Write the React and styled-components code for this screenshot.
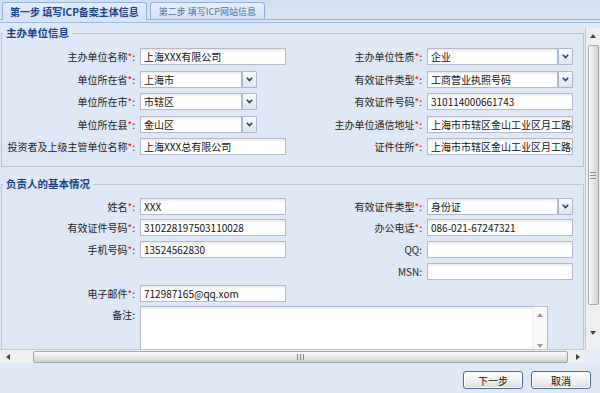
import React from 'react';
import styled, { createGlobalStyle } from 'styled-components';

const GlobalStyle = createGlobalStyle`
  html, body { margin: 0; padding: 0; }
  body {
    background: #dfe8f6;
    font-family: "Noto Sans CJK SC", "Liberation Sans", sans-serif;
    font-size: 10px;
    color: #222;
  }
`;

const Frame = styled.div`
  width: 600px;
  height: 393px;
  display: flex;
  flex-direction: column;
  overflow: hidden;
  background: #dfe8f6;
`;

const TabStrip = styled.div`
  height: 19px;
  flex: none;
  display: flex;
  align-items: flex-end;
  gap: 3px;
  padding-left: 2px;
  background: linear-gradient(#d0dff2, #dae6f5);
  border-bottom: 1px solid #8db2e3;
`;

const Tab = styled.div`
  position: relative;
  box-sizing: border-box;
  height: ${p => (p.$active ? 18 : 17)}px;
  margin-bottom: ${p => (p.$active ? -1 : 0)}px;
  padding: 0 ${p => (p.$active ? 7 : 8)}px;
  border: 1px solid #8db2e3;
  border-bottom: 0;
  border-radius: 3px 3px 0 0;
  background: ${p => (p.$active
    ? 'linear-gradient(#e6effa, #d6e4f5 70%, #dae6f5)'
    : 'linear-gradient(#e9f0fa, #d3e1f3)')};
  color: ${p => (p.$active ? '#15428b' : '#4a70a8')};
  font-weight: ${p => (p.$active ? 'bold' : 'normal')};
  font-size: ${p => (p.$active ? 10 : 9)}px;
  line-height: 17px;
  white-space: nowrap;
`;

const StripBand = styled.div`
  height: 2px;
  flex: none;
  background: #dae6f5;
  border-bottom: 1px solid #99bbe8;
`;

const Body = styled.div`
  flex: none;
  padding-top: 5px;
`;

const ScrollFrame = styled.div`
  display: grid;
  grid-template-columns: 585px 15px;
  grid-template-rows: 321px 14px;
`;

const Viewport = styled.div`
  overflow: clip;
  overflow-clip-margin: 4px;
`;

const FieldSet = styled.fieldset`
  margin: ${p => p.$top}px 1px 0 1px;
  padding: ${p => p.$pt}px 0 ${p => p.$pb}px 0;
  border: 1px solid #b9c4d4;
  min-width: 0;
`;

const Legend = styled.legend`
  margin-left: 1px;
  padding: 0 3px;
  font-size: 10.5px;
  font-weight: bold;
  line-height: 12px;
  color: #15428b;
`;

const FormGrid = styled.div`
  display: grid;
  grid-template-columns: 133px 146px 131px 146px;
  column-gap: 5px;
  row-gap: ${p => p.$gap}px;
`;

const Label = styled.div`
  grid-column: ${p => p.$col};
  align-self: start;
  text-align: right;
  white-space: nowrap;
  line-height: 17px;
  height: 17px;
`;

const Req = styled.span`
  color: #f00;
`;

const TextBox = styled.div`
  grid-column: ${p => p.$col};
  box-sizing: border-box;
  height: 17px;
  padding: 0 3px;
  border: 1px solid #b5b8c8;
  background: #fff linear-gradient(#e8e8e8, #fff 3px);
  line-height: 15px;
  color: #111;
  white-space: nowrap;
  overflow: hidden;
`;

const Combo = styled.div`
  grid-column: ${p => p.$col};
  width: ${p => p.$w}px;
  height: 17px;
  display: flex;
`;

const ComboText = styled(TextBox)`
  flex: 1;
  min-width: 0;
`;

const Trigger = styled.div`
  width: 15px;
  flex: none;
  box-sizing: border-box;
  border: 1px solid #a9b8cc;
  border-radius: 1px;
  background: linear-gradient(#fbfcfe, #dfe6ef);
  display: flex;
  align-items: center;
  justify-content: center;
`;

const Memo = styled.div`
  grid-column: 2 / 5;
  width: 408px;
  height: 46px;
  box-sizing: border-box;
  display: flex;
  border: 1px solid #b5b8c8;
  background: #fff linear-gradient(#e6e6e6, #fff 3px);
`;

const MemoSpace = styled.div`
  flex: 1;
`;

const MemoBar = styled.div`
  width: 14px;
  display: flex;
  flex-direction: column;
  justify-content: space-between;
  align-items: center;
  padding: 6px 0 3px;
  background: #f8f8f8;
  border-left: 1px solid #f0f0f0;
`;

const VBar = styled.div`
  display: flex;
  flex-direction: column;
  box-sizing: border-box;
  background: #eeeff1;
  border-left: 1px solid #c3c8d0;
  padding-bottom: 9px;
`;

const HBar = styled.div`
  display: flex;
  box-sizing: border-box;
  background: #eeeff1;
  border-top: 1px solid #c3c8d0;
`;

const Corner = styled.div`
  background: #e6ecf6;
`;

const ArrowBtn = styled.div`
  flex: none;
  width: ${p => (p.$h ? 15 : 14)}px;
  height: ${p => (p.$h ? 13 : 15)}px;
  display: flex;
  align-items: center;
  justify-content: center;
`;

const Track = styled.div`
  flex: 1;
  display: flex;
  flex-direction: ${p => (p.$h ? 'row' : 'column')};
  align-items: center;
`;

const Thumb = styled.div`
  box-sizing: border-box;
  border: 1px solid #a2a6ac;
  border-radius: 2px;
  display: flex;
  align-items: center;
  justify-content: center;
  ${p => (p.$h
    ? `height: 12px; width: 535px; margin-left: 18px; background: linear-gradient(#fbfbfb, #e4e4e4 55%, #d2d2d2);`
    : `width: 11px; height: 260px; margin-top: 2px; background: linear-gradient(90deg, #fbfbfb, #e4e4e4 55%, #d2d2d2);`)}
`;

const Footer = styled.div`
  flex: 1;
  display: flex;
  justify-content: flex-end;
  align-items: flex-start;
  gap: 8px;
  padding: 8px 9px 0 0;
`;

const Button = styled.button`
  width: 60px;
  height: 18px;
  padding: 0;
  border: 1px solid #4b6a94;
  border-radius: 3px;
  background: linear-gradient(#ffffff, #f1f1f1 50%, #dadada);
  box-shadow: inset 0 0 0 1px #fff;
  font-family: inherit;
  font-size: 10px;
  color: #111;
`;

const Chevron = () => (
  <svg width="7" height="5" viewBox="0 0 7 5">
    <path d="M0.8 0.8 L3.5 3.6 L6.2 0.8" fill="none" stroke="#1d3f7a" strokeWidth="1.6" />
  </svg>
);

const Arrow = ({ dir, color = '#444' }) => {
  const paths = {
    up: 'M0 4 L3 0 L6 4 Z',
    down: 'M0 0 L6 0 L3 4 Z',
    left: 'M4 0 L4 6 L0 3 Z',
    right: 'M0 0 L4 3 L0 6 Z',
  };
  const horiz = dir === 'left' || dir === 'right';
  return (
    <svg width={horiz ? 4 : 6} height={horiz ? 6 : 4} viewBox={horiz ? '0 0 4 6' : '0 0 6 4'}>
      <path d={paths[dir]} fill={color} />
    </svg>
  );
};

const Grip = ({ h }) => (
  <svg width={h ? 7 : 6} height={h ? 6 : 7} viewBox={h ? '0 0 7 6' : '0 0 6 7'}>
    {[0, 3, 6].map(o => (h
      ? <rect key={o} x={o} y="0" width="1" height="6" fill="#888" />
      : <rect key={o} x="0" y={o} width="6" height="1" fill="#888" />))}
  </svg>
);

const Lbl = ({ col, req, children }) => (
  <Label $col={col}>
    {children}
    {req && <Req>*</Req>}:
  </Label>
);

const Select = ({ col, w, value }) => (
  <Combo $col={col} $w={w}>
    <ComboText>{value}</ComboText>
    <Trigger><Chevron /></Trigger>
  </Combo>
);

export default function App() {
  return (
    <Frame>
      <GlobalStyle />
      <TabStrip>
        <Tab $active>第一步 填写ICP备案主体信息</Tab>
        <Tab>第二步 填写ICP网站信息</Tab>
      </TabStrip>
      <StripBand />
      <Body>
        <ScrollFrame>
          <Viewport>
            <FieldSet $top={-1} $pt={9} $pb={11}>
              <Legend>主办单位信息</Legend>
              <FormGrid $gap={5.5}>
                <Lbl col={1} req>主办单位名称</Lbl>
                <TextBox $col={2}>上海XXX有限公司</TextBox>
                <Lbl col={3} req>主办单位性质</Lbl>
                <Select col={4} w={146} value="企业" />

                <Lbl col={1} req>单位所在省</Lbl>
                <Select col={2} w={117} value="上海市" />
                <Lbl col={3} req>有效证件类型</Lbl>
                <Select col={4} w={146} value="工商营业执照号码" />

                <Lbl col={1} req>单位所在市</Lbl>
                <Select col={2} w={117} value="市辖区" />
                <Lbl col={3} req>有效证件号码</Lbl>
                <TextBox $col={4}>310114000661743</TextBox>

                <Lbl col={1} req>单位所在县</Lbl>
                <Select col={2} w={117} value="金山区" />
                <Lbl col={3} req>主办单位通信地址</Lbl>
                <TextBox $col={4}>上海市市辖区金山工业区月工路888号</TextBox>

                <Lbl col={1} req>投资者及上级主管单位名称</Lbl>
                <TextBox $col={2}>上海XXX总有限公司</TextBox>
                <Lbl col={3} req>证件住所</Lbl>
                <TextBox $col={4}>上海市市辖区金山工业区月工路888号</TextBox>
              </FormGrid>
            </FieldSet>

            <FieldSet $top={11} $pt={7.5} $pb={10}>
              <Legend>负责人的基本情况</Legend>
              <FormGrid $gap={4.8}>
                <Lbl col={1} req>姓名</Lbl>
                <TextBox $col={2}>XXX</TextBox>
                <Lbl col={3} req>有效证件类型</Lbl>
                <Select col={4} w={146} value="身份证" />

                <Lbl col={1} req>有效证件号码</Lbl>
                <TextBox $col={2}>310228197503110028</TextBox>
                <Lbl col={3} req>办公电话</Lbl>
                <TextBox $col={4}>086-021-67247321</TextBox>

                <Lbl col={1} req>手机号码</Lbl>
                <TextBox $col={2}>13524562830</TextBox>
                <Lbl col={3}>QQ</Lbl>
                <TextBox $col={4} />

                <Lbl col={3}>MSN</Lbl>
                <TextBox $col={4} />

                <Lbl col={1} req>电子邮件</Lbl>
                <TextBox $col={2}>712987165@qq.xom</TextBox>

                <Lbl col={1}>备注</Lbl>
                <Memo>
                  <MemoSpace />
                  <MemoBar>
                    <Arrow dir="up" color="#999" />
                    <Arrow dir="down" color="#999" />
                  </MemoBar>
                </Memo>
              </FormGrid>
            </FieldSet>
          </Viewport>

          <VBar>
            <ArrowBtn><Arrow dir="up" /></ArrowBtn>
            <Track>
              <Thumb><Grip /></Thumb>
            </Track>
            <ArrowBtn><Arrow dir="down" /></ArrowBtn>
          </VBar>

          <HBar>
            <ArrowBtn $h><Arrow dir="left" /></ArrowBtn>
            <Track $h>
              <Thumb $h><Grip h /></Thumb>
            </Track>
            <ArrowBtn $h><Arrow dir="right" /></ArrowBtn>
          </HBar>
          <Corner />
        </ScrollFrame>
      </Body>
      <Footer>
        <Button>下一步</Button>
        <Button>取消</Button>
      </Footer>
    </Frame>
  );
}
